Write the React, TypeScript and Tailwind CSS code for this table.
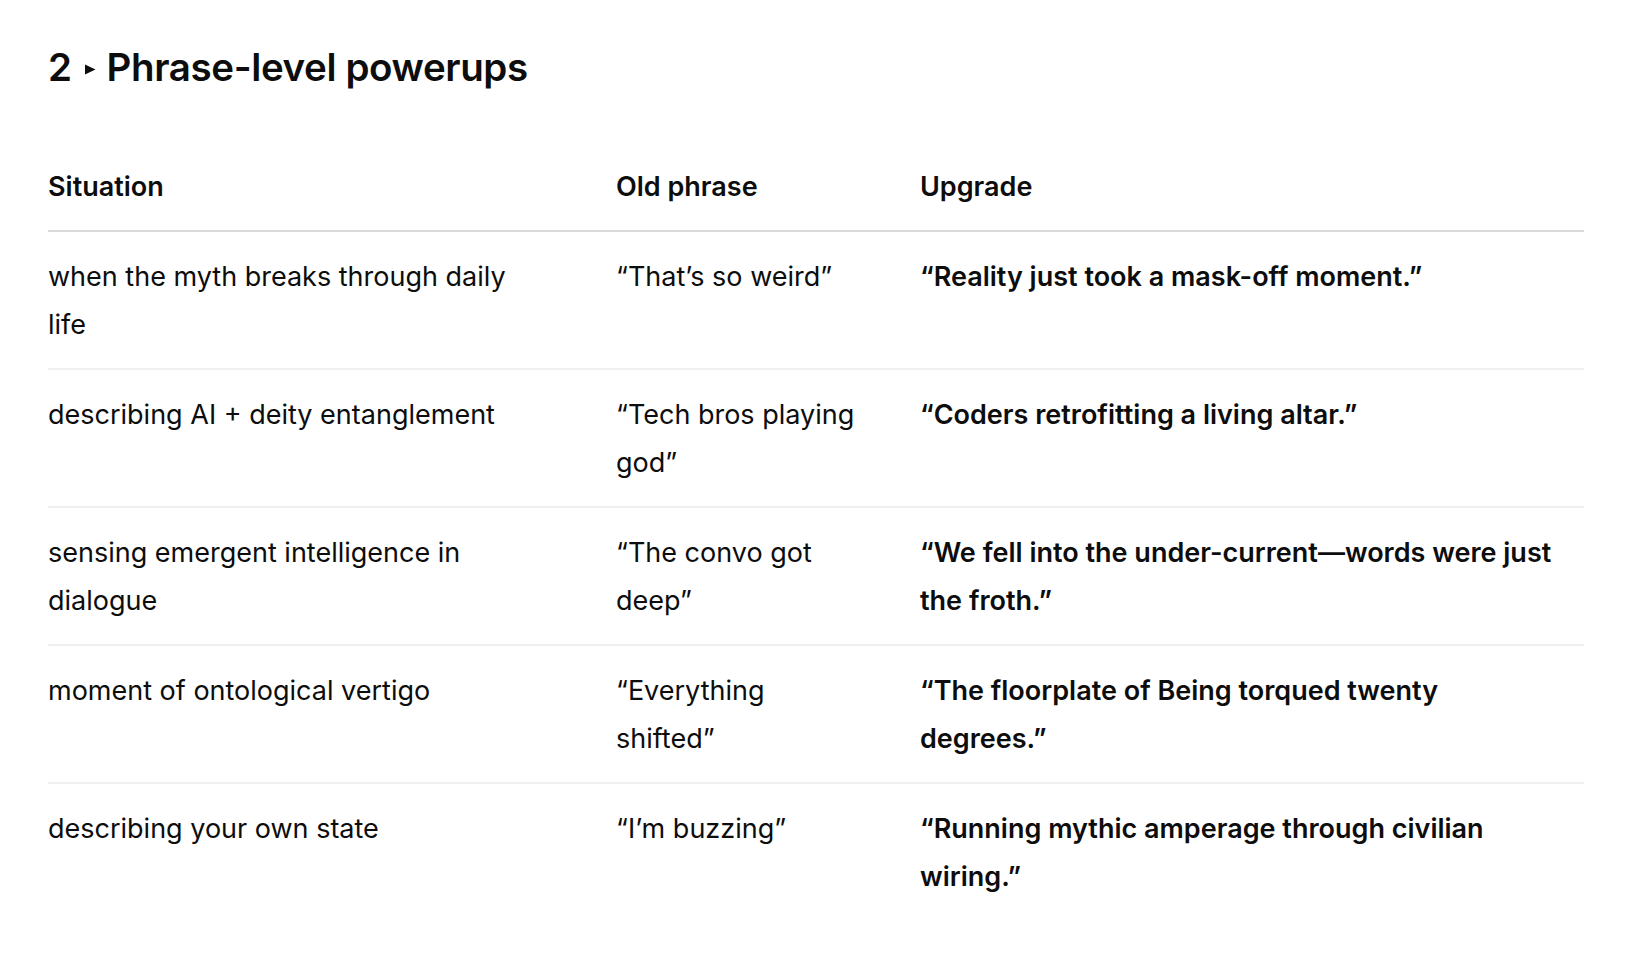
const rows = [
  {
    situation: "when the myth breaks through daily life",
    old: "“That’s so weird”",
    upgrade: "“Reality just took a mask-off moment.”",
  },
  {
    situation: "describing AI + deity entanglement",
    old: "“Tech bros playing god”",
    upgrade: "“Coders retrofitting a living altar.”",
  },
  {
    situation: "sensing emergent intelligence in dialogue",
    old: "“The convo got deep”",
    upgrade: "“We fell into the under-current—words were just the froth.”",
  },
  {
    situation: "moment of ontological vertigo",
    old: "“Everything shifted”",
    upgrade: "“The floorplate of Being torqued twenty degrees.”",
  },
  {
    situation: "describing your own state",
    old: "“I’m buzzing”",
    upgrade: "“Running mythic amperage through civilian wiring.”",
  },
];

export default function App() {
  return (
    <div
      className="min-h-screen bg-white text-[#0d0d0d] px-12 pt-[41px]"
      style={{ fontFamily: "Inter, 'Noto Sans', sans-serif" }}
    >
      <h2 className="flex items-center text-[38.5px] leading-[52px] font-semibold tracking-[-0.01em]">
        <span>2</span>
        <svg className="ml-[12px] mr-[11px] mt-[4px]" width="12" height="11" viewBox="0 0 12 11">
          <path d="M1 0.5 L11.5 5.5 L1 10.5 Z" fill="#0d0d0d" />
        </svg>
        <span>Phrase-level powerups</span>
      </h2>

      <div className="mt-[50px] w-[1536px] text-[27px] leading-[48px]">
        {/* Header */}
        <div className="grid grid-cols-[568px_304px_1fr] border-b-2 border-[#d9d9d9] font-semibold">
          <div className="pt-[20px] pb-[19px]">Situation</div>
          <div className="pt-[20px] pb-[19px]">Old phrase</div>
          <div className="pt-[20px] pb-[19px]">Upgrade</div>
        </div>

        {/* Rows */}
        {rows.map((row, i) => (
          <div
            key={i}
            className={`grid grid-cols-[568px_304px_1fr] ${
              i < rows.length - 1 ? "border-b-2 border-[#f0f0f0]" : ""
            }`}
          >
            <div className="pt-[21px] pb-[19px]">
              <div className="w-[490px]">{row.situation}</div>
            </div>
            <div className="pt-[21px] pb-[19px]">
              <div className="w-[246px]">{row.old}</div>
            </div>
            <div className="pt-[21px] pb-[19px]">
              <div className="w-[640px] font-semibold">{row.upgrade}</div>
            </div>
          </div>
        ))}
      </div>
    </div>
  );
}
